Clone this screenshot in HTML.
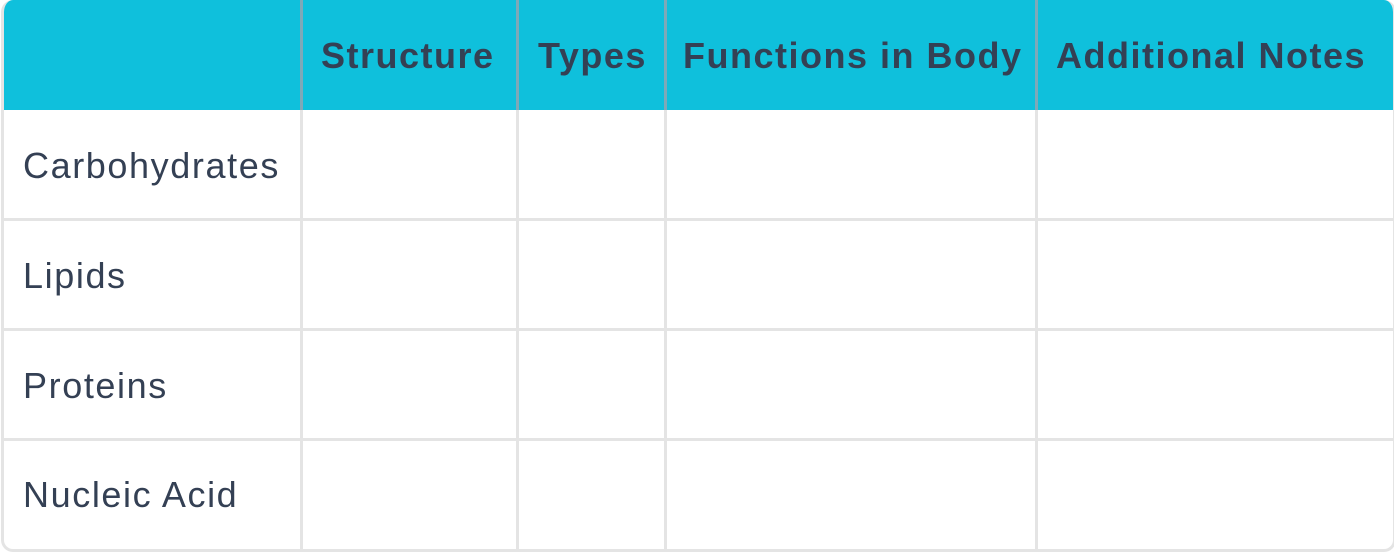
<!DOCTYPE html>
<html><head><style>
body{margin:0;width:1394px;height:553px;background:#fff;overflow:hidden;font-family:"Liberation Sans",sans-serif;color:#344054}
.box{position:absolute;left:1px;top:0;width:1389px;height:549px;border:3px solid #e4e4e4;border-top:none;border-radius:12px;overflow:hidden}
.hd{position:absolute;left:0;top:0;width:100%;height:110px;background:#0fc0dc}
.v{position:absolute;top:0;width:3px;height:549px;background:#e4e4e4}
.vh{position:absolute;top:0;width:3px;height:110px;background:#7fa9b8}
.h{position:absolute;left:0;width:100%;height:3px;background:#e4e4e4}
.t{position:absolute;font-size:36px;letter-spacing:1.5px;font-weight:bold;top:35px;white-space:nowrap}
.r{position:absolute;left:19px;font-size:36px;letter-spacing:1.6px;white-space:nowrap}
</style></head><body>
<div class="box">
<div class="hd"></div>
<div class="v" style="left:296px"></div><div class="vh" style="left:296px"></div>
<div class="v" style="left:512px"></div><div class="vh" style="left:512px"></div>
<div class="v" style="left:660px"></div><div class="vh" style="left:660px"></div>
<div class="v" style="left:1031px"></div><div class="vh" style="left:1031px"></div>
<div class="h" style="top:218px"></div>
<div class="h" style="top:328px"></div>
<div class="h" style="top:438px"></div>
<div class="t" style="left:317px">Structure</div>
<div class="t" style="left:534px">Types</div>
<div class="t" style="left:679px">Functions in Body</div>
<div class="t" style="left:1052px">Additional Notes</div>
<div class="r" style="top:145px">Carbohydrates</div>
<div class="r" style="top:255px">Lipids</div>
<div class="r" style="top:365px">Proteins</div>
<div class="r" style="top:474px">Nucleic Acid</div>
</div>
</body></html>
